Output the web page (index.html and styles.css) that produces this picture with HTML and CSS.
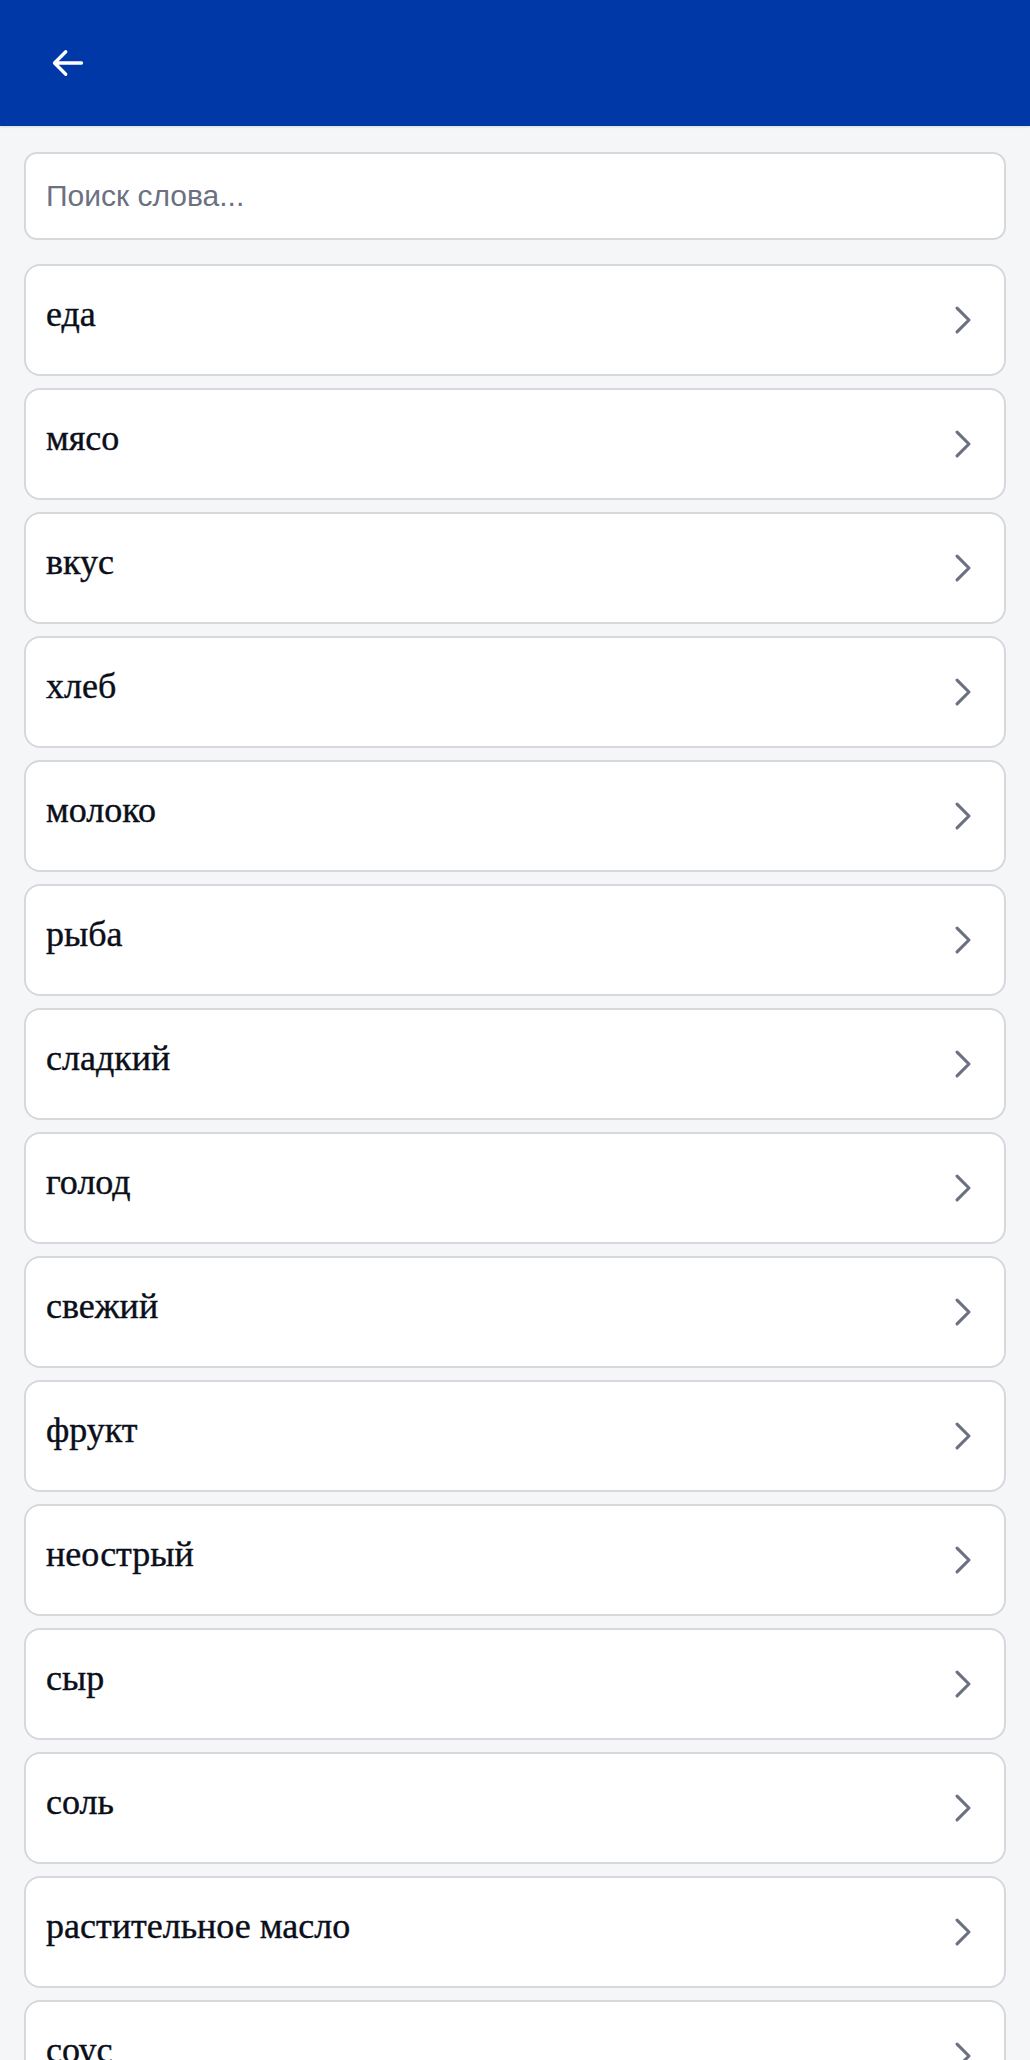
FILE: index.html
```html
<!DOCTYPE html>
<html lang="ru">
<head>
  <meta charset="UTF-8">
  <meta name="viewport" content="width=device-width, initial-scale=1.0">
  <title>Словарь</title>
  <link rel="stylesheet" href="styles.css">
</head>
<body>
  <header class="topbar">
    <a class="back-btn" href="#" aria-label="Назад">
      <svg width="36" height="36" viewBox="0 0 24 24" fill="none" stroke="currentColor" stroke-width="2.2" stroke-linecap="round" stroke-linejoin="round">
        <path d="M10.5 19.5 3 12m0 0 7.5-7.5M3 12h18"/>
      </svg>
    </a>
  </header>
  <main class="content">
    <input class="search" type="text" placeholder="Поиск слова...">
    <ul class="word-list">
      <li class="word"><span>еда</span><svg class="chev" viewBox="0 0 24 24"><path d="m8.25 4.5 7.5 7.5-7.5 7.5"/></svg></li>
      <li class="word"><span>мясо</span><svg class="chev" viewBox="0 0 24 24"><path d="m8.25 4.5 7.5 7.5-7.5 7.5"/></svg></li>
      <li class="word"><span>вкус</span><svg class="chev" viewBox="0 0 24 24"><path d="m8.25 4.5 7.5 7.5-7.5 7.5"/></svg></li>
      <li class="word"><span>хлеб</span><svg class="chev" viewBox="0 0 24 24"><path d="m8.25 4.5 7.5 7.5-7.5 7.5"/></svg></li>
      <li class="word"><span>молоко</span><svg class="chev" viewBox="0 0 24 24"><path d="m8.25 4.5 7.5 7.5-7.5 7.5"/></svg></li>
      <li class="word"><span>рыба</span><svg class="chev" viewBox="0 0 24 24"><path d="m8.25 4.5 7.5 7.5-7.5 7.5"/></svg></li>
      <li class="word"><span>сладкий</span><svg class="chev" viewBox="0 0 24 24"><path d="m8.25 4.5 7.5 7.5-7.5 7.5"/></svg></li>
      <li class="word"><span>голод</span><svg class="chev" viewBox="0 0 24 24"><path d="m8.25 4.5 7.5 7.5-7.5 7.5"/></svg></li>
      <li class="word"><span>свежий</span><svg class="chev" viewBox="0 0 24 24"><path d="m8.25 4.5 7.5 7.5-7.5 7.5"/></svg></li>
      <li class="word"><span>фрукт</span><svg class="chev" viewBox="0 0 24 24"><path d="m8.25 4.5 7.5 7.5-7.5 7.5"/></svg></li>
      <li class="word"><span>неострый</span><svg class="chev" viewBox="0 0 24 24"><path d="m8.25 4.5 7.5 7.5-7.5 7.5"/></svg></li>
      <li class="word"><span>сыр</span><svg class="chev" viewBox="0 0 24 24"><path d="m8.25 4.5 7.5 7.5-7.5 7.5"/></svg></li>
      <li class="word"><span>соль</span><svg class="chev" viewBox="0 0 24 24"><path d="m8.25 4.5 7.5 7.5-7.5 7.5"/></svg></li>
      <li class="word"><span>растительное масло</span><svg class="chev" viewBox="0 0 24 24"><path d="m8.25 4.5 7.5 7.5-7.5 7.5"/></svg></li>
      <li class="word"><span>соус</span><svg class="chev" viewBox="0 0 24 24"><path d="m8.25 4.5 7.5 7.5-7.5 7.5"/></svg></li>
    </ul>
  </main>
</body>
</html>
```

FILE: styles.css
```css
html, body {
  margin: 0; padding: 0;
  background: #f5f6f8;
  font-family: "Liberation Sans", Arial, sans-serif;
}
.topbar {
  height: 126px;
  background: #0038a8;
  display: flex; align-items: center;
  padding: 0 0 0 50px;
  box-sizing: border-box;
  box-shadow: 0 1px 2px rgba(0,0,0,0.12);
}
.back-btn { color: #fff; display: flex; }
.content { padding: 26px 24px 0 24px; }
.search {
  display: block; width: 100%; box-sizing: border-box;
  height: 88px;
  border: 2px solid #d6d8dc; border-radius: 13px;
  background: #fff;
  padding: 0 20px;
  font-family: "Liberation Sans", Arial, sans-serif;
  font-size: 30px; color: #111;
  outline: none;
}
.search::placeholder { color: #6b7180; }
.word-list { list-style: none; margin: 24px 0 0 0; padding: 0; display: flex; flex-direction: column; gap: 12px; }
.word {
  height: 112px; box-sizing: border-box;
  background: #fff;
  border: 2px solid #d6d8dc; border-radius: 16px;
  display: flex; align-items: center; justify-content: space-between;
  padding: 0 22px 0 20px;
  font-family: "Liberation Serif", "Times New Roman", serif;
  font-size: 36px; color: #0b0f1a;
  -webkit-text-stroke: 0.4px #0b0f1a;
}
.word span { margin-top: -13px; }
.chev { width: 38px; height: 38px; fill: none; stroke: #6b7180; stroke-width: 2; stroke-linecap: round; stroke-linejoin: round; }
```
